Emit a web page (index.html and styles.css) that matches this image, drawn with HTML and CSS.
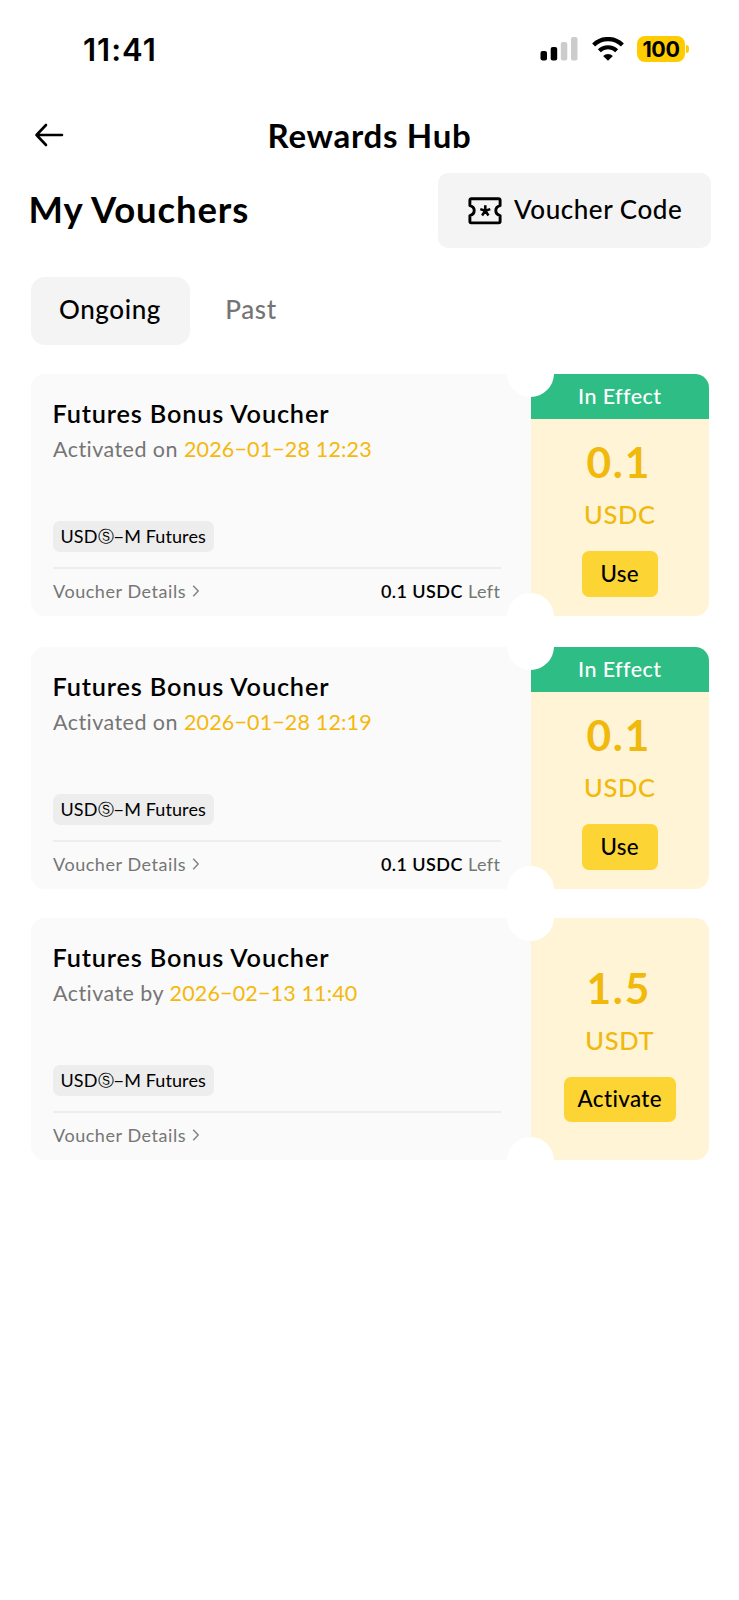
FILE: index.html
```html
<!DOCTYPE html>
<html lang="en">
<head>
<meta charset="utf-8">
<title>Rewards Hub</title>
<link rel="stylesheet" href="styles.css">
</head>
<body>
<header class="status">
  <span class="time">11:41</span>
  <div class="status-icons">
    <svg class="signal" width="38" height="24" viewBox="0 0 38 24"><rect x="0.5" y="14" width="6.5" height="9.5" rx="2"/><rect x="10.7" y="10" width="6.5" height="13.5" rx="2"/><rect class="off" x="20.8" y="5" width="6.5" height="18.5" rx="2"/><rect class="off" x="31" y="0" width="6.5" height="23.5" rx="2"/></svg>
    <svg class="wifi" width="32" height="24" viewBox="0 0 32 24"><path class="arc" d="M1.6 7.9a20.6 20.6 0 0 1 28.8 0M7.3 13.7a12.7 12.7 0 0 1 17.4 0"/><path d="M16 23.7l-4.9-4.8a7.2 7.2 0 0 1 9.8 0z"/></svg>
    <div class="battery"><span class="level">100</span><i class="cap"></i></div>
  </div>
</header>
<nav class="nav">
  <svg class="back" width="30" height="24" viewBox="0 0 30 24"><path d="M28 12H2.5M12 2L2.5 12l9.500 10"/></svg>
  <h1>Rewards Hub</h1>
</nav>
<main>
  <div class="heading">
    <h2>My Vouchers</h2>
    <button class="code"><svg width="34" height="28" viewBox="0 0 34 28"><path class="line" d="M3.2 1.7h27.6a1.3 1.3 0 0 1 1.3 1.3v5.6c-2.9.7-4.3 2.6-4.3 5s1.4 4.300 4.300 5v6a1.300 1.300 0 0 1-1.300 1.300H3.200a1.300 1.300 0 0 1-1.300-1.300v-6c2.900-.7 4.300-2.600 4.300-5s-1.400-4.300-4.300-5V3a1.300 1.300 0 0 1 1.300-1.300z"/><path class="star" d="M17.300 13.800V8.300M17.300 13.800l5-1.700M17.300 13.800l3.200 4.700M17.300 13.800l-3.200 4.700M17.300 13.800l-5-1.700"/></svg><span>Voucher Code</span></button>
  </div>
  <div class="tabs"><button class="tab active">Ongoing</button><button class="tab">Past</button></div>
  <section class="cards">
    <article class="card">
      <div class="info">
        <h3>Futures Bonus Voucher</h3>
        <p class="date">Activated on <b>2026−01−28 12:23</b></p>
        <div class="tag">USD<i>Ⓢ</i>−M Futures</div>
        <div class="foot"><a>Voucher Details<svg width="8" height="12" viewBox="0 0 8 12"><path d="M1.200 0.700l5 5.300-5 5.300"/></svg></a><span><b>0.1 USDC</b> Left</span></div>
      </div>
      <div class="value"><div class="effect">In Effect</div><div class="box"><strong>0.1</strong><em>USDC</em><button>Use</button></div></div>
    </article>
    <article class="card second">
      <div class="info">
        <h3>Futures Bonus Voucher</h3>
        <p class="date">Activated on <b>2026−01−28 12:19</b></p>
        <div class="tag">USD<i>Ⓢ</i>−M Futures</div>
        <div class="foot"><a>Voucher Details<svg width="8" height="12" viewBox="0 0 8 12"><path d="M1.200 0.700l5 5.300-5 5.300"/></svg></a><span><b>0.1 USDC</b> Left</span></div>
      </div>
      <div class="value"><div class="effect">In Effect</div><div class="box"><strong>0.1</strong><em>USDC</em><button>Use</button></div></div>
    </article>
    <article class="card third">
      <div class="info">
        <h3>Futures Bonus Voucher</h3>
        <p class="date">Activate by <b>2026−02−13 11:40</b></p>
        <div class="tag">USD<i>Ⓢ</i>−M Futures</div>
        <div class="foot"><a>Voucher Details<svg width="8" height="12" viewBox="0 0 8 12"><path d="M1.200 0.700l5 5.300-5 5.300"/></svg></a></div>
      </div>
      <div class="value"><div class="box"><strong>1.5</strong><em>USDT</em><button>Activate</button></div></div>
    </article>
  </section>
</main>
</body>
</html>
```
FILE: styles.css
```css
* { box-sizing: border-box; }
body { margin: 0; width: 739px; min-height: 1600px; background: #fff; color: #000; font-family: Lato, "Liberation Sans", "DejaVu Sans", sans-serif; font-variant-ligatures: none; }
h1, h2, h3, p { margin: 0; }
button { border: 0; padding: 0; color: inherit; font-family: inherit; }
svg { display: block; flex: none; }
.status { height: 97px; padding: 0 50px 0 83px; display: flex; justify-content: space-between; }
.time { font: 600 31px/99px Inter, sans-serif; letter-spacing: 1px; }
.status-icons { display: flex; height: 97px; align-items: center; }
.signal .off { fill: #ccc; }
.wifi { margin-left: 14px; }
.wifi .arc { fill: none; stroke: #000; stroke-width: 4.2; }
.battery { display: flex; align-items: center; margin-left: 13px; }
.level { width: 48px; height: 26px; border-radius: 8px; background: #fc0; font: 700 21.5px/26px Inter, sans-serif; letter-spacing: -.4px; text-align: center; }
.cap { width: 3px; height: 8px; margin-left: 1px; border-radius: 0 4px 4px 0; background: #fc0; }
.nav { display: grid; grid-template-columns: 40px 1fr 40px; height: 76px; padding: 0 34px; align-items: center; }
.back { fill: none; stroke: #000; stroke-width: 2.6; stroke-linecap: round; stroke-linejoin: round; }
h1 { font-size: 33px; line-height: 74px; font-weight: 700; text-align: center; letter-spacing: .7px; }
main { padding: 0 28px 0 30.5px; }
.heading { height: 75px; display: flex; justify-content: space-between; align-items: center; }
h2 { margin-left: -2px; padding-bottom: 4px; font-size: 36.5px; font-weight: 700; line-height: 70px; letter-spacing: .85px; }
.code { width: 273px; height: 75px; border-radius: 10px; background: #f4f4f4; display: flex; align-items: center; padding-left: 30px; gap: 12px; font-size: 26px; font-weight: 500; letter-spacing: .55px; }
.code span { padding-bottom: 4px; }
.line { fill: none; stroke: #000; stroke-width: 2.9; stroke-linejoin: round; }
.star { fill: none; stroke: #000; stroke-width: 2.5; }
.tabs { display: flex; margin-top: 29px; height: 68px; }
.tab { width: 159px; height: 68px; padding-bottom: 4px; font-size: 26px; font-weight: 500; letter-spacing: .6px; color: #757575; background: none; border-radius: 14px; }
.tab.active { background: #f4f4f4; color: #000; }
.tab + .tab { width: 123px; }
.cards { margin-top: 28.5px; }
.card { position: relative; display: flex; width: 678.5px; height: 242.5px; border-radius: 14px; overflow: hidden; background: #fafafa; }
.card.second { margin-top: 30.5px; }
.card.third { margin-top: 28.5px; }
.card::before, .card::after { content: ""; position: absolute; left: 476.5px; width: 47px; height: 47px; border-radius: 50%; background: #fff; }
.card::before { top: -23.5px; }
.card::after { bottom: -23.5px; }
.info { width: 500px; padding: 22px 30px 0 22.5px; }
h3 { margin-left: -.5px; font-size: 25.3px; line-height: 35px; font-weight: 600; letter-spacing: .83px; }
.date { font-size: 21.5px; line-height: 36px; color: #757575; letter-spacing: .45px; }
.date b { font-weight: 400; color: #f5b80c; letter-spacing: .15px; }
.tag { display: flex; align-items: center; width: 160.5px; height: 30.5px; margin-top: 54.5px; padding: 0 0 1px 7.5px; border-radius: 7px; background: #ededed; font-size: 18px; letter-spacing: .1px; }
.tag i { padding-top: 2px; font-style: normal; font-size: 16px; }
.foot { display: flex; justify-content: space-between; margin-top: 15px; border-top: 2px solid #ededed; font-size: 18px; line-height: 45px; color: #757575; letter-spacing: .55px; }
.foot a { display: flex; align-items: center; gap: 6px; }
.foot svg { fill: none; stroke: #858585; stroke-width: 1.5; }
.foot b { font-weight: 600; color: #000; }
.foot span { letter-spacing: .45px; }
.value { width: 178.5px; background: #fff4d6; display: flex; flex-direction: column; text-align: center; }
.effect { height: 45.5px; line-height: 45.5px; background: #2ebd85; color: #fff; font-size: 21.5px; font-weight: 500; letter-spacing: .4px; }
.box { flex: 1; display: flex; flex-direction: column; align-items: center; justify-content: center; color: #f0b90b; }
.effect + .box { padding-bottom: 8px; }
strong { margin-left: -2px; font-size: 42.5px; line-height: 64px; font-weight: 700; letter-spacing: 1.7px; }
em { font-style: normal; font-size: 25.5px; line-height: 40px; font-weight: 500; letter-spacing: .6px; }
.box button { margin-top: 17px; height: 45.5px; min-width: 76px; padding: 0 14px 1px; border-radius: 7px; background: #fcd535; color: #000; font-size: 22.3px; font-weight: 500; letter-spacing: .4px; }
.third .box button { width: 112.5px; }
```
